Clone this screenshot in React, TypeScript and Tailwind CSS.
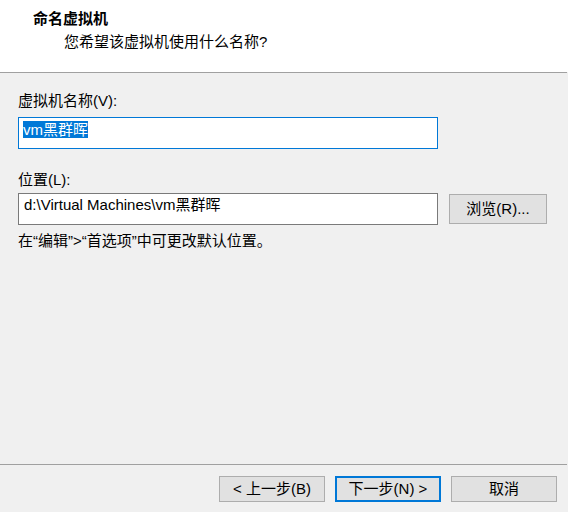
import React from "react";

export default function App() {
  return (
    <div className="w-[568px] h-[512px] bg-[#f0f0f0] flex flex-col text-black text-[15px] leading-[20px] font-['Liberation_Sans','Noto_Sans_CJK_SC',sans-serif] overflow-hidden">
      {/* Header */}
      <div className="h-[72px] bg-white flex flex-col">
        <div className="pt-[9px] pl-[33px] font-bold">命名虚拟机</div>
        <div className="mt-[3px] pl-[64px]">您希望该虚拟机使用什么名称?</div>
      </div>
      <div className="h-px w-[567px] bg-[#a0a0a0]" />

      {/* Body */}
      <div className="flex-1 flex flex-col px-[18px] pt-[18px]">
        <div>虚拟机名称(V):</div>
        <div className="mt-[6px] w-[420px] h-[32px] border border-[#0078d7] bg-white pl-[4px] pt-[2px]">
          <span className="inline-block h-[17px] leading-[17px] bg-[#0078d7] text-white">vm黑群晖</span>
        </div>

        <div className="mt-[21px]">位置(L):</div>
        <div className="mt-[3px] flex items-center">
          <div className="w-[420px] h-[32px] border border-[#7a7a7a] bg-white pl-[5px] pt-[1px]">
            <span className="inline-block leading-[20px]">d:\Virtual Machines\vm黑群晖</span>
          </div>
          <button className="ml-[11px] w-[98px] h-[30px] border border-[#adadad] bg-[#e1e1e1] flex items-center justify-center">
            浏览(R)...
          </button>
        </div>
        <div className="mt-[6px]">在“编辑”&gt;“首选项”中可更改默认位置。</div>
      </div>

      {/* Footer */}
      <div className="h-px w-[567px] bg-[#a0a0a0]" />
      <div className="h-[47px] flex justify-end items-start gap-[10px] pt-[11px] pr-[11px]">
        <button className="w-[106px] h-[26px] border border-[#adadad] bg-[#e1e1e1] flex items-center justify-center">
          &lt; 上一步(B)
        </button>
        <button className="w-[106px] h-[26px] border-2 border-[#0078d7] bg-[#e1e1e1] flex items-center justify-center">
          下一步(N) &gt;
        </button>
        <button className="w-[106px] h-[26px] border border-[#adadad] bg-[#e1e1e1] flex items-center justify-center">
          取消
        </button>
      </div>
    </div>
  );
}
